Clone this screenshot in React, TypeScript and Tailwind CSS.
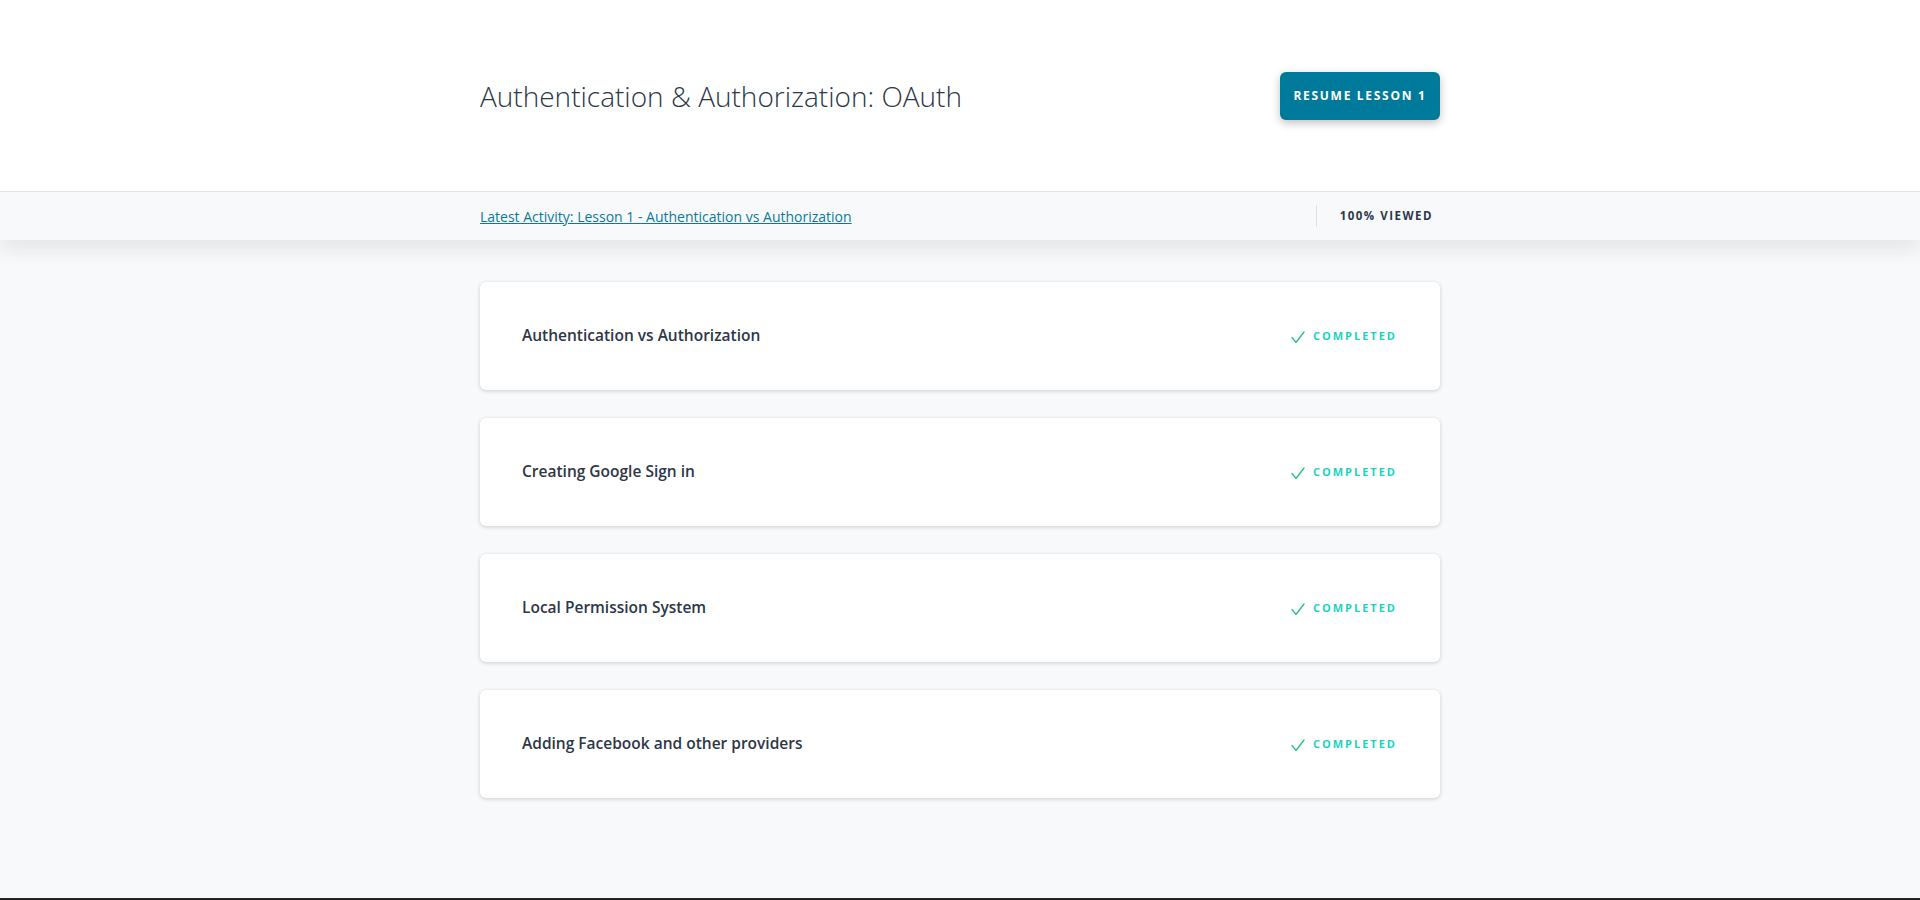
const lessons = [
  "Authentication vs Authorization",
  "Creating Google Sign in",
  "Local Permission System",
  "Adding Facebook and other providers",
];

function LessonCard({ title }: { title: string }) {
  return (
    <div className="h-[108px] bg-white rounded-md shadow-[0_1px_4px_rgba(0,0,0,0.18)] flex items-center justify-between pl-[42px] pr-[43px]">
      <span className="text-[15.5px] font-semibold text-[#2d3748]">{title}</span>
      <div className="flex items-center">
        <svg width="14" height="13" viewBox="0 0 14 13" className="mr-[8px] mt-[3px]" fill="none">
          <path d="M1 6.5 L5 11.5 L13 1" stroke="#2ec27e" strokeWidth="1.4" strokeLinecap="round" strokeLinejoin="round" />
        </svg>
        <span className="text-[11px] font-bold tracking-[2px] text-[#1dd3c0]">COMPLETED</span>
      </div>
    </div>
  );
}

export default function App() {
  return (
    <div className="min-h-[900px] flex flex-col bg-[#f8f9fb] font-['Open_Sans',sans-serif] border-b-2 border-[#222]">
      <header className="bg-white border-b border-[#e2e5ea]">
        <div className="w-[960px] mx-auto h-[191px] flex items-center justify-between">
          <h1 className="text-[28px] font-light text-[#2d3748]">Authentication &amp; Authorization: OAuth</h1>
          <button className="w-[160px] h-[48px] rounded-md bg-[#007a9a] text-white text-[12px] font-bold tracking-[1.7px] shadow-[0_3px_8px_rgba(0,0,0,0.25)]">
            RESUME LESSON 1
          </button>
        </div>
      </header>

      <div className="bg-[#f8f9fb] h-[48px] shadow-[0_10px_20px_rgba(0,0,0,0.08)] relative">
        <div className="w-[960px] mx-auto h-full flex items-center justify-between">
          <a href="#" className="text-[14px] text-[#0b7a9a] underline">Latest Activity: Lesson 1 - Authentication vs Authorization</a>
          <div className="flex items-center h-full">
            <div className="w-px h-[22px] bg-[#dde0e5] mr-[23px]"></div>
            <span className="text-[11.5px] font-bold tracking-[1.5px] text-[#2d3748] pr-[7px]">100% VIEWED</span>
          </div>
        </div>
      </div>

      <main className="flex-1">
        <div className="w-[960px] mx-auto pt-[42px] flex flex-col gap-[28px]">
          {lessons.map((l) => (
            <LessonCard key={l} title={l} />
          ))}
        </div>
      </main>
    </div>
  );
}
